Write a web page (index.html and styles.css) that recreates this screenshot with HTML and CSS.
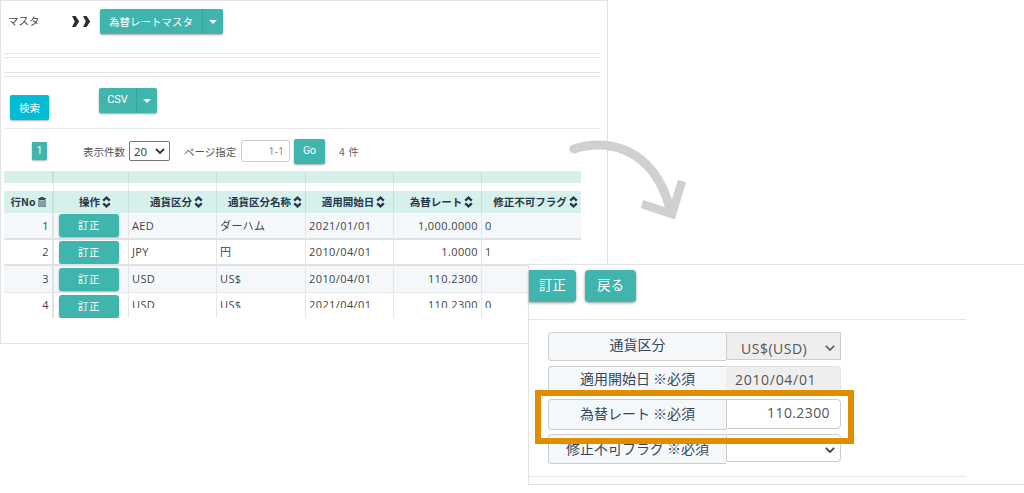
FILE: index.html
```html
<!DOCTYPE html>
<html lang="ja">
<head>
<meta charset="utf-8">
<title>為替レートマスタ</title>
<link rel="stylesheet" href="styles.css">
</head>
<body>
<svg width="0" height="0" class="defs"><defs><path id="s" d="M1.200 4.700L4.500 1.600 7.800 4.700M1.200 7.300L4.500 10.400 7.800 7.300" fill="none" stroke="#23384a" stroke-width="2.300"/></defs></svg>
<section class="list-window">
  <div class="crumbs">
    <span class="crumb-label">マスタ</span>
    <svg class="chevrons" width="20" height="12" viewBox="0 0 20 12"><path d="M0 0h3.600L7.200 5.500 3.600 11H0L2.800 5.500zM11 0h3.600L18.200 5.500 14.600 11H11L13.800 5.500z" fill="#2c2c2c"/></svg>
    <div class="split split-title"><span class="split-main">為替レートマスタ</span><span class="split-caret"><i class="caret"></i></span></div>
  </div>
  <div class="rules">
    <hr class="rule"><hr class="rule rule-b"><hr class="rule rule-c"><hr class="rule rule-b">
  </div>
  <div class="search-row">
    <button class="btn-search">検索</button>
    <div class="split split-csv"><span class="split-main">CSV</span><span class="split-caret"><i class="caret"></i></span></div>
  </div>
  <div class="pager">
    <span class="page-num">1</span>
    <span class="pager-label">表示件数</span>
    <span class="mini-select">20<svg width="10" height="6" viewBox="0 0 10 6"><path d="M1 1l4 4 4-4" fill="none" stroke="#333" stroke-width="1.800"/></svg></span>
    <span class="pager-label page-spec">ページ指定</span>
    <span class="page-input">1-1</span>
    <span class="go">Go</span>
    <span class="count">4 件</span>
  </div>
  <table class="grid">
    <colgroup><col class="c1"><col class="c2"><col class="c3"><col class="c4"><col class="c5"><col class="c6"><col class="c7"></colgroup>
    <thead>
      <tr class="filter"><td></td><td></td><td></td><td></td><td></td><td></td><td></td></tr>
      <tr class="gap"><td></td><td></td><td></td><td></td><td></td><td></td><td></td></tr>
      <tr>
        <th>行No<svg class="trash" width="8" height="10" viewBox="0 0 8 10"><path d="M0 1.500h8M2.500 1.500V.5h3v1M1 2.500h6V10H1zM3 3.500V9M5 3.500V9" fill="none" stroke="#3a4a55" stroke-width="1"/></svg></th>
        <th>操作<svg class="sort" viewBox="0 0 9 12"><use href="#s"/></svg></th>
        <th>通貨区分<svg class="sort" viewBox="0 0 9 12"><use href="#s"/></svg></th>
        <th>通貨区分名称<svg class="sort" viewBox="0 0 9 12"><use href="#s"/></svg></th>
        <th>適用開始日<svg class="sort" viewBox="0 0 9 12"><use href="#s"/></svg></th>
        <th>為替レート<svg class="sort" viewBox="0 0 9 12"><use href="#s"/></svg></th>
        <th>修正不可フラグ<svg class="sort" viewBox="0 0 9 12"><use href="#s"/></svg></th>
      </tr>
    </thead>
    <tbody class="rows">
      <tr class="odd heavy r1"><td class="num">1</td><td class="act"><span class="fix">訂正</span></td><td>AED</td><td>ダーハム</td><td>2021/01/01</td><td class="num">1,000.0000</td><td>0</td></tr>
      <tr class="heavy r2"><td class="num">2</td><td class="act"><span class="fix">訂正</span></td><td>JPY</td><td>円</td><td>2010/04/01</td><td class="num">1.0000</td><td>1</td></tr>
      <tr class="odd r3"><td class="num">3</td><td class="act"><span class="fix">訂正</span></td><td>USD</td><td>US$</td><td>2010/04/01</td><td class="num">110.2300</td><td></td></tr>
      <tr class="last"><td class="num">4</td><td class="act"><span class="fix">訂正</span></td><td><span class="clip">USD</span></td><td><span class="clip">US$</span></td><td><span class="clip">2021/04/01</span></td><td class="num"><span class="clip">110.2300</span></td><td><span class="clip">0</span></td></tr>
    </tbody>
  </table>
</section>

<svg class="arrow" width="130" height="90" viewBox="0 0 130 90">
  <path d="M8 16C40 5 88 14 104 76" fill="none" stroke="#d0d0d0" stroke-width="9" stroke-linecap="round"/>
  <path d="M76 71L106 81 116 48" fill="none" stroke="#d0d0d0" stroke-width="8.500" stroke-linejoin="miter"/>
</svg>

<section class="edit-window">
  <div class="edit-actions">
    <span class="big-btn btn-fix">訂正</span>
    <span class="big-btn btn-back">戻る</span>
  </div>
  <hr class="edit-rule">
  <div class="form">
    <div class="form-row row-1"><div class="f-label">通貨区分</div><div class="f-value v-select v-grey"><span>US$(USD)</span><svg width="10" height="6" viewBox="0 0 10 6"><path d="M.8 .8L5 5 9.200 .8" fill="none" stroke="#555" stroke-width="1.600"/></svg></div></div>
    <div class="form-row row-2"><div class="f-label">適用開始日 ※必須</div><div class="f-value v-date">2010/04/01</div></div>
    <div class="form-row row-3"><div class="f-label">為替レート ※必須</div><div class="f-value v-num">110.2300</div></div>
    <div class="form-row row-4"><div class="f-label">修正不可フラグ ※必須</div><div class="f-value v-select"><span></span><svg width="10" height="6" viewBox="0 0 10 6"><path d="M.8 .8L5 5 9.200 .8" fill="none" stroke="#444" stroke-width="1.800"/></svg></div></div>
  </div>
  <hr class="edit-rule">
  <div class="highlight"></div>
</section>
</body>
</html>
```
FILE: styles.css
```css
* { box-sizing: border-box; }
html, body { margin: 0; padding: 0; }
body {
  width: 1024px; height: 493px; position: relative; overflow: hidden; background: #fff;
  font-family: "Noto Sans CJK JP", "Liberation Sans", sans-serif; color: #444;
}
.defs { position: absolute; }
.list-window {
  position: absolute; left: 0; top: 0; width: 608px; height: 344px;
  border: 1px solid #e3e3e3; background: #fff; padding: 0 0 0 3px;
}
.crumbs { display: flex; align-items: flex-start; height: 52px; padding-top: 8px; }
.crumb-label { width: 68px; padding: 3px 0 0 4px; font-size: 10.500px; line-height: 18px; color: #444; }
.chevrons { margin-top: 7px; }
.split {
  display: flex; background: #40b5ad; color: #fff; border-radius: 2px; box-shadow: 0 1px 2px rgba(0,0,0,.35);
  font-size: 10.500px; line-height: 25px;
}
.split-title { margin-left: 8px; height: 25px; }
.split-title .split-main { width: 102px; text-align: center; }
.split-caret { width: 21px; border-left: 1px solid #399f98; display: flex; align-items: center; justify-content: center; }
.caret { width: 0; height: 0; border: 4px solid transparent; border-top-color: #fff; border-bottom-width: 0; }
.rules { height: 26px; }
.rule { margin: 0; border: 0; height: 1px; background: #e6e6e6; width: 596px; }
.rule-b { margin-top: 3px; }
.rule-c { margin-top: 14px; }
.search-row { display: flex; align-items: flex-start; height: 50px; border-bottom: 1px solid #e9e9e9; width: 596px; }
.btn-search {
  margin: 16px 0 0 6px; width: 39px; height: 25px; padding: 0; border: 0; border-radius: 2px; background: #00bcd4; color: #fff;
  font: 10.500px "Noto Sans CJK JP", sans-serif; box-shadow: 0 1px 2px rgba(0,0,0,.3);
}
.split-csv { margin: 9px 0 0 50px; height: 25px; font-family: "Roboto", sans-serif; font-size: 11px; line-height: 24px; }
.split-csv .split-main { width: 37px; text-align: center; }
.split-csv .split-caret { width: 21px; }
.pager { display: flex; align-items: center; height: 42px; padding-top: 2px; font-size: 10.500px; color: #555; }
.page-num { margin-left: 28px; width: 15px; height: 18px; background: #40b5ad; color: #fff; border-radius: 1px; text-align: center; line-height: 18px; box-shadow: 0 1px 2px rgba(0,0,0,.3); font-family: "Roboto", sans-serif; }
.pager-label { margin-left: 36px; white-space: nowrap; color: #555; font-size: 10.500px; }
.mini-select { margin-left: 4px; width: 41px; height: 20px; border: 1px solid #767676; border-radius: 2px; display: flex; align-items: center; justify-content: space-between; padding: 0 4px; font: 11.500px "Open Sans", sans-serif; color: #333; }
.page-spec { margin-left: 14px; width: 53px; }
.page-input { margin-left: 4px; width: 49px; height: 22px; border: 1px solid #ccc; border-radius: 3px; text-align: right; padding-right: 5px; font: 10.500px/20px "Open Sans", sans-serif; color: #888; }
.go { margin-left: 4px; width: 31px; height: 25px; background: #40b5ad; color: #fff; border-radius: 2px; text-align: center; font: 10.500px/23px "Roboto", sans-serif; box-shadow: 0 1px 2px rgba(0,0,0,.35); }
.count { margin-left: 14px; font-size: 10.500px; letter-spacing: .5px; color: #666; }
.grid { border-collapse: separate; border-spacing: 0; table-layout: fixed; width: 577px; font-size: 10.500px; color: #444; }
.c1 { width: 50px; } .c2 { width: 75px; } .c3 { width: 88px; } .c4 { width: 89px; } .c5 { width: 88px; } .c6 { width: 88px; } .c7 { width: 99px; }
.filter td { height: 12px; background: #d8f0ec; border-right: 1px solid #c8dfdb; }
.filter td:first-child { border-right-width: 2px; }
.gap td { height: 8px; background: #fff; border-right: 1px solid #eaeaea; }
.gap td:last-child, .filter td:last-child, .grid th:last-child { border-right: 0; }
.grid th { height: 22px; padding: 0 0 2px 8px; background: #d8f0ec; border-right: 1px solid #c8dfdb; color: #23384a; font-size: 10.500px; font-weight: 700; text-align: center; white-space: nowrap; overflow: hidden; }
.grid th:first-child { border-right-width: 2px; padding: 0 0 2px 1px; }
.sort { width: 9px; height: 12px; margin-left: 2px; vertical-align: -2px; }
.trash { margin-left: 3px; vertical-align: -1px; }
.rows td { padding: 0 4px 0 3px; border-right: 1px solid #e3e6e8; border-bottom: 1px solid #e6e8ea; font-family: "Open Sans", "Noto Sans CJK JP", sans-serif; font-size: 11px; letter-spacing: .4px; line-height: 14px; white-space: nowrap; overflow: hidden; }
.rows td:first-child { border-right: 2px solid #e0e3e5; }
.rows td:last-child { border-right: 0; }
.rows .odd td { background: #f4f8fb; }
.rows .heavy td { border-bottom: 2px solid #dfe1e3; }
.r1 td { height: 27px; }
.r2 td { height: 26px; }
.r3 td { height: 27px; }
.rows .last td { height: 25px; border-bottom: 0; vertical-align: top; padding-top: 5px; }
.rows .last .act { padding-top: 2px; }
.num { text-align: right; }
.rows td.num { padding-right: 3px; }
.rows td.act { padding: 0; letter-spacing: 0; text-align: center; }
.clip { display: block; height: 10px; overflow: hidden; }
.fix { display: block; width: 60px; height: 23px; margin: 0 0 0 5px; background: #40b5ad; color: #fff; border-radius: 3px; font-family: "Noto Sans CJK JP", sans-serif; font-size: 10.500px; line-height: 22px; letter-spacing: .5px; box-shadow: 0 1px 2px rgba(0,0,0,.3); }
.arrow { position: absolute; left: 566px; top: 133px; }
.edit-window {
  position: absolute; left: 528px; top: 264px; width: 496px; height: 221px;
  background: #fff; border: 1px solid #e3e3e3; border-right: 0;
  display: flex; flex-direction: column;
}
.edit-actions { display: flex; height: 54px; padding-top: 5px; align-items: flex-start; }
.big-btn { height: 32px; background: #40b5ad; color: #fff; font-size: 13.500px; line-height: 28px; text-align: center; box-shadow: 0 1px 3px rgba(0,0,0,.4); }
.btn-fix { width: 47px; border-radius: 0 4px 4px 0; }
.btn-back { width: 51px; margin-left: 9px; border-radius: 4px; }
.edit-rule { margin: 0; width: 437px; height: 1px; border: 0; background: #e6e6e6; flex: none; }
.form { padding: 12px 0 0 19px; display: flex; flex-direction: column; height: 156px; flex: none; }
.form-row { display: flex; width: 293px; }
.row-1 { height: 29px; }
.row-2 { height: 30px; margin-top: 5px; }
.row-3 { height: 31px; margin-top: 3px; }
.row-4 { height: 30px; margin-top: 4px; }
.f-label { width: 178px; background: #f4f8fb; border: 1px solid #ccc; border-right: 0; border-radius: 4px 0 0 4px; text-align: center; font-size: 14px; line-height: 23px; color: #34465a; white-space: nowrap; }
.row-3 .f-label { line-height: 26px; }
.row-4 .f-label { line-height: 27px; }
.f-value { width: 115px; border: 1px solid #ccc; font-size: 14px; color: #555; }
.v-select { display: flex; align-items: center; justify-content: space-between; padding: 3px 5px 0 15px; border-radius: 0 4px 4px 0; height: 28px; background: #fff; }
.v-grey { background: #eee; border-radius: 0; font: 14px "Open Sans", sans-serif; letter-spacing: .5px; padding-top: 4px; padding-left: 14px; }
.v-date { background: #eee; border: 1px solid #e4e4e4; border-left: 0; border-radius: 0 4px 0 0; padding-left: 9px; line-height: 26px; font-family: "Open Sans", sans-serif; letter-spacing: .7px; }
.v-num { text-align: right; padding-right: 10px; background: #fff; border-radius: 0 4px 4px 0; height: 30px; line-height: 26px; font-family: "Open Sans", sans-serif; letter-spacing: .4px; }
.highlight { position: absolute; left: 6px; top: 125px; width: 319px; height: 54px; border: 6px solid #e08e00; }
```
